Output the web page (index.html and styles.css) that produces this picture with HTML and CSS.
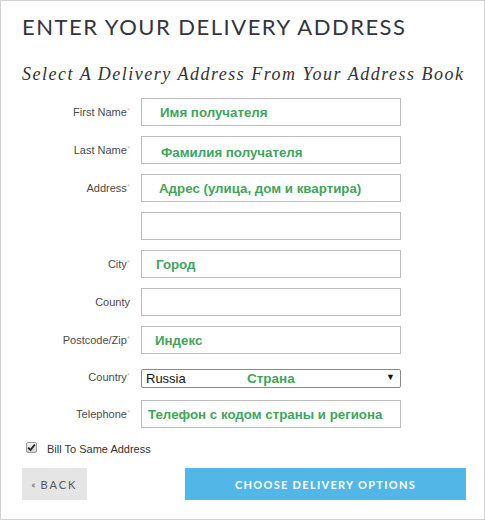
FILE: index.html
```html
<!DOCTYPE html>
<html>
<head>
<meta charset="utf-8">
<link rel="stylesheet" href="styles.css">
</head>
<body>
<div class="page">
  <h1 class="title">ENTER YOUR DELIVERY ADDRESS</h1>
  <h2 class="subtitle">Select A Delivery Address From Your Address Book</h2>
  <div class="form">
    <label class="lbl">First Name<span class="req">*</span></label>
    <div class="field"><span class="hint p19">Имя получателя</span></div>

    <label class="lbl">Last Name<span class="req">*</span></label>
    <div class="field"><span class="hint p20 low">Фамилия получателя</span></div>

    <label class="lbl">Address<span class="req">*</span></label>
    <div class="field"><span class="hint p18">Адрес (улица, дом и квартира)</span></div>

    <span class="lbl"></span>
    <div class="field"></div>

    <label class="lbl">City<span class="req">*</span></label>
    <div class="field"><span class="hint p15">Город</span></div>

    <label class="lbl">County</label>
    <div class="field"></div>

    <label class="lbl">Postcode/Zip<span class="req">*</span></label>
    <div class="field"><span class="hint p14">Индекс</span></div>

    <label class="lbl short">Country<span class="req">*</span></label>
    <div class="select-row">
      <div class="select">
        <span class="sel-val">Russia</span>
        <span class="hint sel-hint">Страна</span>
        <span class="arrow">▼</span>
      </div>
    </div>

    <label class="lbl">Telephone<span class="req">*</span></label>
    <div class="field"><span class="hint p7">Телефон с кодом страны и региона</span></div>
  </div>

  <div class="check-row">
    <span class="checkbox"><svg width="9" height="9" viewBox="0 0 9 9"><path d="M1.2 4.6 L3.5 7 L7.8 1.6" fill="none" stroke="#222" stroke-width="1.8"/></svg></span>
    <span class="check-text">Bill To Same Address</span>
  </div>

  <div class="buttons">
    <div class="btn back"><span class="laquo">«</span>BACK</div>
    <div class="btn choose">CHOOSE DELIVERY OPTIONS</div>
  </div>
</div>
</body>
</html>
```

FILE: styles.css
```css
* { box-sizing: border-box; }
html, body { margin: 0; padding: 0; background: #fff; }
.page {
  width: 485px;
  height: 520px;
  border: 1px solid #d2d2d2;
  padding: 13px 18px 0 20px;
  font-family: "Liberation Sans", Arial, sans-serif;
}
.title {
  margin: 0;
  font-family: Lato, "Open Sans", sans-serif;
  font-weight: 400;
  font-size: 22px;
  line-height: 26px;
  letter-spacing: 1.5px;
  color: #34343e;
  padding-left: 1px;
  white-space: nowrap;
}
.subtitle {
  margin: 23px 0 0 0;
  font-family: "Liberation Serif", "Times New Roman", serif;
  font-style: italic;
  font-weight: 400;
  font-size: 18px;
  line-height: 22px;
  letter-spacing: 1.5px;
  color: #333;
  padding-left: 1px;
  white-space: nowrap;
}
.form {
  margin-top: 13px;
  display: grid;
  grid-template-columns: 112px 260px;
  column-gap: 8px;
  row-gap: 10px;
}
.lbl {
  font-size: 11px;
  color: #4a4a4a;
  text-align: right;
  padding-right: 3px;
  align-self: center;
}
.req {
  color: #f0b48a;
  font-size: 8px;
  vertical-align: 3px;
}
.field {
  height: 28px;
  border: 1px solid #bdbdbd;
  display: flex;
  align-items: center;
}
.hint {
  color: #3fa55b;
  font-weight: 700;
  font-size: 13.3px;
}
.p19 { padding-left: 18px; }
.p20 { padding-left: 19px; }
.p18 { padding-left: 17px; }
.p15 { padding-left: 14px; }
.p14 { padding-left: 13px; }
.p7 { padding-left: 6px; }
.low { padding-top: 4px; }
.select-row {
  height: 26px;
  display: flex;
  align-items: flex-end;
  padding-bottom: 2px;
}
.select {
  width: 260px;
  height: 19px;
  border: 1px solid #8a8a8a;
  border-radius: 2px;
  display: flex;
  align-items: center;
  position: relative;
  padding-left: 4px;
}
.sel-val {
  font-size: 13px;
  color: #111;
  width: 101px;
}
.sel-hint {
  font-size: 13.5px;
}
.arrow {
  position: absolute;
  right: 5px;
  top: 2px;
  font-size: 9px;
  color: #111;
}
.check-row {
  margin-top: 13px;
  height: 16px;
  display: flex;
  align-items: center;
  padding-left: 5px;
}
.checkbox {
  width: 11px;
  height: 11px;
  border: 1px solid #9a9a9a;
  border-radius: 2px;
  background: linear-gradient(#f2f2f2, #cfcfcf);
  display: flex;
  align-items: center;
  justify-content: center;
  margin-top: -4px;
}
.check-text {
  margin-left: 10px;
  font-size: 11px;
  color: #333;
}
.buttons {
  margin-top: 11px;
  display: flex;
  justify-content: space-between;
}
.btn {
  height: 32px;
  display: flex;
  align-items: center;
  justify-content: center;
  font-family: Lato, "Open Sans", sans-serif;
}
.back {
  width: 65px;
  background: #e5e5e5;
  color: #555;
  font-size: 11px;
  letter-spacing: 2px;
  margin-left: 1px;
}
.laquo {
  font-size: 9px;
  margin-right: 3px;
}
.choose {
  width: 281px;
  background: #52b6e7;
  color: #fff;
  font-weight: 700;
  font-size: 11px;
  letter-spacing: 1.3px;
}
```
